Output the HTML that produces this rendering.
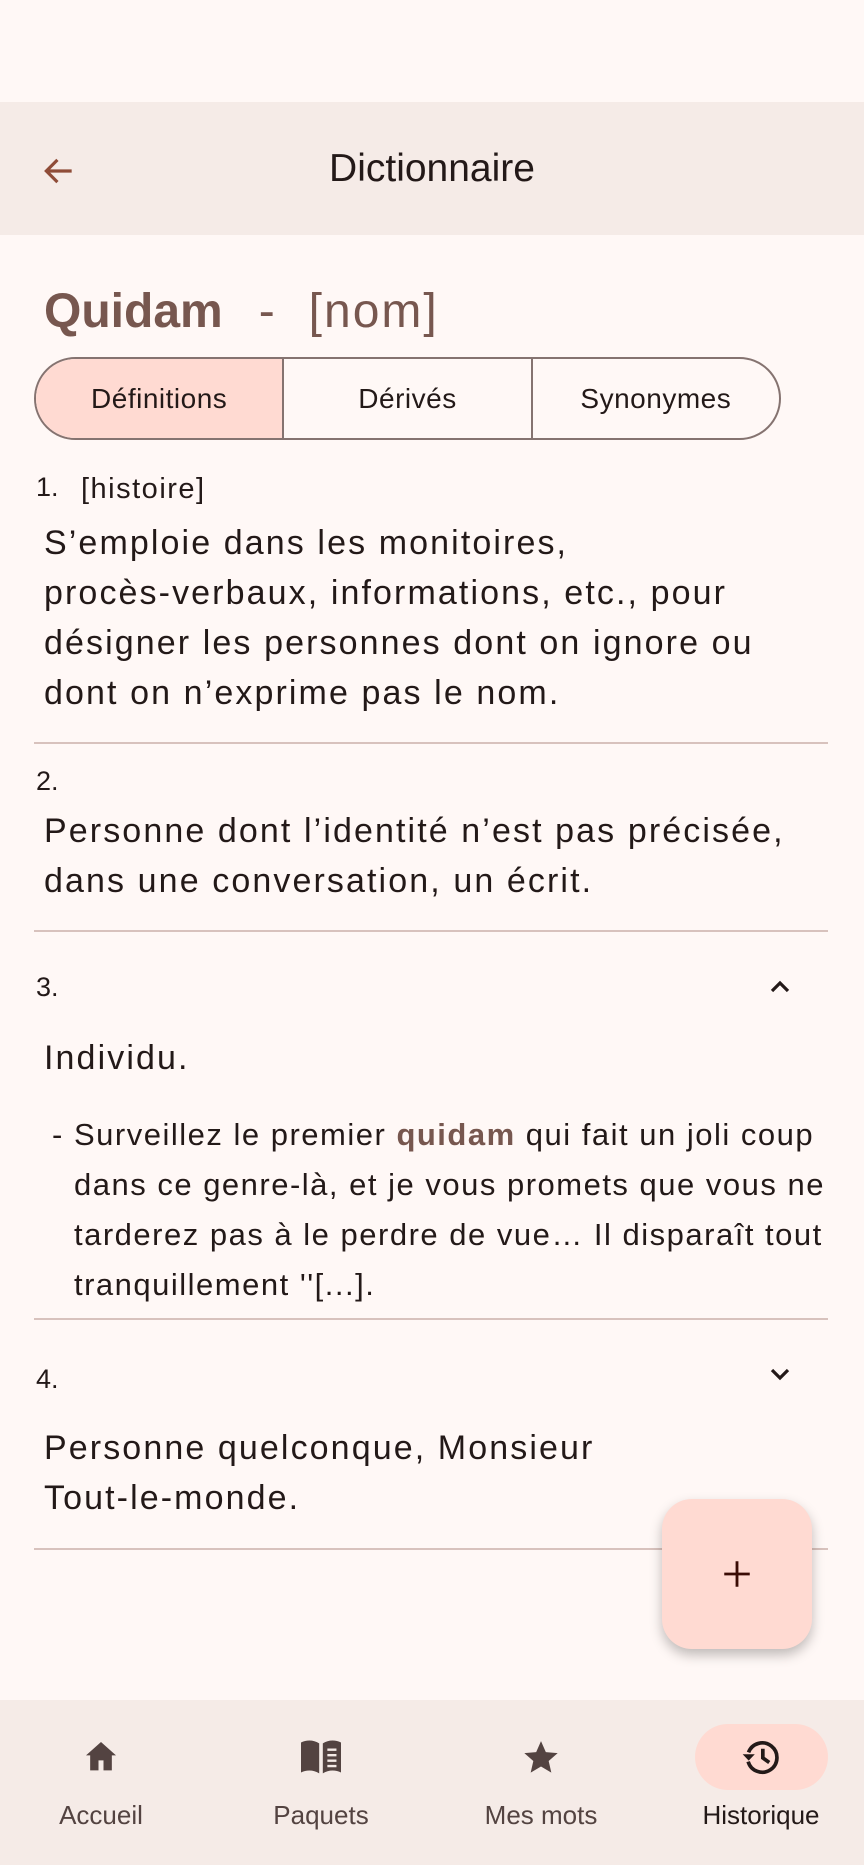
<!DOCTYPE html>
<html><head><meta charset="utf-8"><style>
*{margin:0;padding:0;box-sizing:border-box}
body{width:864px;height:1865px;background:#fff8f6;font-family:"Liberation Sans",sans-serif;color:#231918;position:relative;overflow:hidden}
.abs{position:absolute}
.bar{left:0;top:102px;width:864px;height:133px;background:#f5ebe7}
.title{left:0;width:864px;top:145px;text-align:center;font-size:39px;line-height:48px}
.t{position:absolute;left:44px;font-size:34px;line-height:50px;white-space:nowrap;letter-spacing:2.1px}
.num{position:absolute;left:36px;font-size:27px;line-height:34px}
.div{position:absolute;left:34px;width:794px;height:2px;background:#d8c2bd}
.q{position:absolute;left:74px;font-size:31px;line-height:50px;white-space:nowrap;letter-spacing:1.5px}
.seg{left:34px;top:357px;width:747px;height:83px;border:2px solid #857370;border-radius:42px;overflow:hidden;display:flex}
.seg div{flex:1;display:flex;align-items:center;justify-content:center;font-size:28px;letter-spacing:.5px}
.nav{left:0;top:1700px;width:864px;height:165px;background:#f5ebe7}
.lab{position:absolute;top:1800px;width:200px;text-align:center;font-size:26px;color:#534341}
</style></head><body>
<div class="abs bar"></div>
<svg class="abs" style="left:40px;top:152px" width="38" height="38" viewBox="0 0 24 24"><path d="M20 12H4M11 5l-7 7 7 7" fill="none" stroke="#8f4c38" stroke-width="2"/></svg>
<div class="abs title">Dictionnaire</div>
<div class="abs" style="left:44px;top:282px;font-size:48px;line-height:60px;color:#77574f;white-space:nowrap"><b>Quidam</b><span style="margin-left:36px">-</span><span style="margin-left:34px;letter-spacing:2px">[nom]</span></div>
<div class="abs seg"><div style="background:#ffdad2;border-right:2px solid #857370">Définitions</div><div style="border-right:2px solid #857370">Dérivés</div><div>Synonymes</div></div>
<div class="num" style="top:470px">1.</div><div class="num" style="left:81px;top:472px;font-size:29px;letter-spacing:1.5px">[histoire]</div>
<div class="t" style="top:518px">S’emploie dans les monitoires,</div>
<div class="t" style="top:568px">procès-verbaux, informations, etc., pour</div>
<div class="t" style="top:618px">désigner les personnes dont on ignore ou</div>
<div class="t" style="top:668px">dont on n’exprime pas le nom.</div>
<div class="div" style="top:742px"></div>
<div class="num" style="top:764px">2.</div>
<div class="t" style="top:806px">Personne dont l’identité n’est pas précisée,</div>
<div class="t" style="top:856px">dans une conversation, un écrit.</div>
<div class="div" style="top:930px"></div>
<div class="num" style="top:970px">3.</div>
<svg class="abs" style="left:764px;top:971px" width="32" height="32" viewBox="0 0 24 24"><path d="M6 15l6-6 6 6" fill="none" stroke="#231918" stroke-width="2.4"/></svg>
<div class="t" style="top:1033px">Individu.</div>
<div class="q" style="left:52px;top:1110px">-</div>
<div class="q" style="top:1110px">Surveillez le premier <b style="color:#77574f">quidam</b> qui fait un joli coup</div>
<div class="q" style="top:1160px">dans ce genre-là, et je vous promets que vous ne</div>
<div class="q" style="top:1210px">tarderez pas à le perdre de vue… Il disparaît tout</div>
<div class="q" style="top:1260px">tranquillement ''[...].</div>
<div class="div" style="top:1318px"></div>
<div class="num" style="top:1362px">4.</div>
<svg class="abs" style="left:764px;top:1358px" width="32" height="32" viewBox="0 0 24 24"><path d="M6 9l6 6 6-6" fill="none" stroke="#231918" stroke-width="2.4"/></svg>
<div class="t" style="top:1423px">Personne quelconque, Monsieur</div>
<div class="t" style="top:1473px">Tout-le-monde.</div>
<div class="div" style="top:1548px"></div>
<div class="abs" style="left:662px;top:1499px;width:150px;height:150px;border-radius:30px;background:#ffdad2;box-shadow:0 6px 12px rgba(0,0,0,.25)"></div>
<svg class="abs" style="left:720px;top:1557px" width="34" height="34" viewBox="0 0 24 24"><path d="M12 3v18M3 12h18" stroke="#3a0b04" stroke-width="2"/></svg>
<div class="abs nav"></div>
<div class="abs" style="left:695px;top:1724px;width:133px;height:66px;border-radius:33px;background:#ffdad2"></div>
<svg class="abs" style="left:81px;top:1737px" width="40" height="40" viewBox="0 0 24 24"><path d="M12 3L3 11h2.5v9h5v-6h3v6h5v-9H21z" fill="#534341"/></svg>
<svg class="abs" style="left:299px;top:1737px" width="44" height="40" viewBox="0 0 24 22"><path d="M1 3c3-1.5 7-1.5 10 0.5V20c-3-2-7-2-10-0.5z M13 3.5c3-2 7-2 10-0.5v16.5c-3-1.5-7-1.5-10 0.5z" fill="#534341"/><path d="M15.5 7h5M15.5 10h5M15.5 13h5M15.5 16h5" stroke="#f5ebe7" stroke-width="1.3"/></svg>
<svg class="abs" style="left:521px;top:1737px" width="40" height="40" viewBox="0 0 24 24"><path d="M12 2.5l2.9 6.6 7.1.6-5.4 4.7 1.6 7-6.2-3.7-6.2 3.7 1.6-7L2 9.7l7.1-.6z" fill="#534341"/></svg>
<svg class="abs" style="left:739px;top:1735px" width="44" height="44" viewBox="0 0 24 24"><path d="M5.2 9.5A8 8 0 1 1 5 14.5" fill="none" stroke="#231918" stroke-width="2"/><path d="M2 10.5l3.3 3.5 3.3-3.5z" fill="#231918"/><path d="M13 7.5v5l3.5 2.5" fill="none" stroke="#231918" stroke-width="2"/></svg>
<div class="lab" style="left:1px">Accueil</div>
<div class="lab" style="left:221px">Paquets</div>
<div class="lab" style="left:441px">Mes mots</div>
<div class="lab" style="left:661px;color:#231918">Historique</div>
</body></html>
